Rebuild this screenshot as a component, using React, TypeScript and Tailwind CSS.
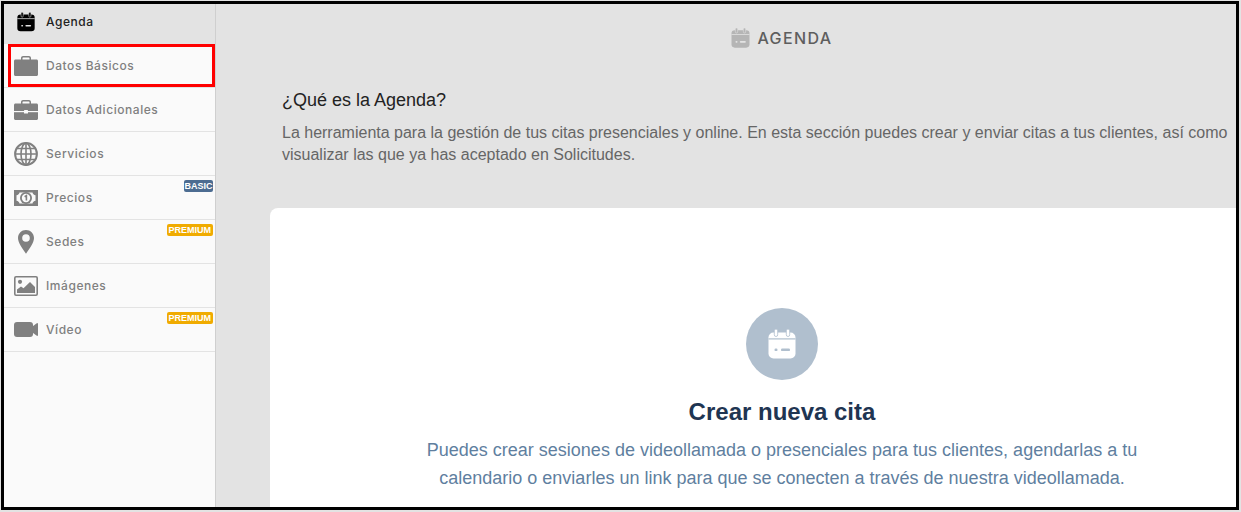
import type { ReactNode } from 'react';

const navFont = "font-['Inter','Noto_Sans',sans-serif]";
const bodyFont = "font-['Liberation_Sans',Arial,sans-serif]";

function CalendarIcon({ fill, cut, className }: { fill: string; cut: string; className: string }) {
  return (
    <svg viewBox="0 0 28 30" className={className}>
      <rect x="0.5" y="3.500" width="27" height="26" rx="5" fill={fill} />
      <rect x="6.300" y="0" width="3.400" height="7.500" rx="1.700" fill={fill} stroke={cut} strokeWidth="0.800" />
      <rect x="18.300" y="0" width="3.400" height="7.500" rx="1.700" fill={fill} stroke={cut} strokeWidth="0.800" />
      <rect x="0.500" y="9.300" width="27" height="1.200" fill={cut} />
      <rect x="6.500" y="19.500" width="3" height="2.600" rx="1.200" fill={cut} />
      <rect x="13" y="19.500" width="9" height="2.600" rx="1.200" fill={cut} />
    </svg>
  );
}

function Briefcase({ clasp }: { clasp?: boolean }) {
  return (
    <svg viewBox="0 0 24 20" className="h-5 w-6" fill="#808080">
      <path d="M7 4V2C7 .9 7.900 0 9 0h6c1.100 0 2 .9 2 2v2h-1.500V2.200c0-.4-.3-.7-.7-.7H9.200c-.4 0-.7.300-.7.700V4z" />
      <path d="M1.500 3.500h21c.8 0 1.500.7 1.500 1.500v13.500c0 .8-.7 1.500-1.500 1.500h-21C.7 20 0 19.300 0 18.500V5c0-.8.7-1.500 1.500-1.500z" />
      {clasp && <rect x="0" y="11" width="24" height="1.200" fill="#fafafa" />}
      {clasp && <rect x="10" y="10" width="4" height="3.400" rx=".5" fill="#fafafa" />}
    </svg>
  );
}

function Globe() {
  return (
    <svg viewBox="0 0 24 24" className="h-6 w-6" fill="none" stroke="#808080" strokeWidth="1.600">
      <circle cx="12" cy="12" r="10.900" strokeWidth="2" />
      <ellipse cx="12" cy="12" rx="5" ry="10.900" />
      <path d="M12 1.100v21.800M1.100 12h21.800M2.800 6.500h18.400M2.800 17.500h18.400" />
    </svg>
  );
}

function Bill() {
  return (
    <svg viewBox="0 0 24 16" className="h-4 w-6">
      <rect x="0" y="0" width="24" height="16" fill="#808080" />
      <path d="M5.500 2.500h13c.2 1.400 1.400 2.500 3 2.700v5.600c-1.600.2-2.800 1.300-3 2.700h-13c-.2-1.400-1.400-2.500-3-2.700V5.200c1.600-.2 2.800-1.300 3-2.700z" fill="#fafafa" />
      <circle cx="12" cy="8" r="6" fill="#808080" />
      <circle cx="12" cy="8" r="4.200" fill="#fafafa" />
      <path d="M10.600 6.700l1.800-1.100v5" fill="none" stroke="#808080" strokeWidth="1.600" />
    </svg>
  );
}

function Pin() {
  return (
    <svg viewBox="0 0 16 24" className="h-6 w-4" fill="#808080">
      <path fillRule="evenodd" d="M8 0c4.400 0 8 3.500 8 7.900 0 4.700-4.500 10.400-8 15.800C4.500 18.300 0 12.600 0 7.900 0 3.500 3.600 0 8 0zm0 4.200a3.800 3.800 0 1 0 0 7.600 3.800 3.800 0 0 0 0-7.600z" />
    </svg>
  );
}

function Picture() {
  return (
    <svg viewBox="0 0 24 20" className="h-5 w-6">
      <rect x=".8" y=".8" width="22.400" height="18.400" rx="1.200" fill="none" stroke="#808080" strokeWidth="1.600" />
      <circle cx="6" cy="5.800" r="2.100" fill="#808080" />
      <path d="M3 17v-3.500l4-3 2.500 1.800 6.500-6.300 5 5V17z" fill="#808080" />
    </svg>
  );
}

function Video() {
  return (
    <svg viewBox="0 0 24 15" className="h-[15px] w-6" fill="#808080">
      <rect x="0" y="0" width="19" height="15" rx="3" />
      <path d="M17 5.500L22.800 1.200c.5-.3 1.200 0 1.200.6v11.400c0 .6-.7.900-1.200.6L17 9.500z" />
    </svg>
  );
}

function NavRow({ icon, label, badge, boxed }: { icon: ReactNode; label: string; badge?: 'BASIC' | 'PREMIUM'; boxed?: boolean }) {
  return (
    <div className="relative flex h-11 items-center gap-2 border-b border-[#e3e3e3] px-[10px]">
      <span className="flex w-6 shrink-0 justify-center">{icon}</span>
      <span className={`${navFont} text-[12px] font-[450] tracking-[0.55px] text-[#808080]`}>{label}</span>
      {badge === 'BASIC' && (
        <span className={`${bodyFont} absolute right-[2px] top-1 rounded-[2px] bg-[#4c6c91] px-[0.5px] text-[9px] font-bold leading-3 text-white`}>BASIC</span>
      )}
      {badge === 'PREMIUM' && (
        <span className={`${bodyFont} absolute right-[2px] top-1 rounded-[2px] bg-[#f0ab00] px-[2px] text-[9px] font-bold leading-3 text-white`}>PREMIUM</span>
      )}
      {boxed && <span className="absolute inset-y-0 left-1 right-0 border-[3px] border-[#ff0000]" />}
    </div>
  );
}

export default function App() {
  return (
    <div className="h-[512px] w-[1241px] overflow-hidden bg-[#e3e3e3] pb-[2px] pl-px pr-[2px] pt-px">
      <div className="flex h-full overflow-hidden border-[3px] border-black bg-[#e3e3e3]">
        <aside className="w-[212px] shrink-0 border-r border-[#cfcfcf] bg-[#fafafa]">
          <div className="flex h-10 items-center gap-2 bg-[#e3e3e3] px-[10px] pb-1">
            <span className="flex w-6 shrink-0 justify-center">
              <CalendarIcon fill="#000000" cut="#e3e3e3" className="h-5 w-[18px]" />
            </span>
            <span className={`${navFont} text-[12px] font-[450] tracking-[0.55px] text-[#222222]`}>Agenda</span>
          </div>
          <NavRow icon={<Briefcase />} label="Datos Básicos" boxed />
          <NavRow icon={<Briefcase clasp />} label="Datos Adicionales" />
          <NavRow icon={<Globe />} label="Servicios" />
          <NavRow icon={<Bill />} label="Precios" badge="BASIC" />
          <NavRow icon={<Pin />} label="Sedes" badge="PREMIUM" />
          <NavRow icon={<Picture />} label="Imágenes" />
          <NavRow icon={<Video />} label="Vídeo" badge="PREMIUM" />
        </aside>

        <main className={`${bodyFont} ml-[54px] flex w-[1024px] shrink-0 flex-col`}>
          <div className="flex h-[67px] items-center justify-center gap-[7px]">
            <CalendarIcon fill="#b5b5b5" cut="#e3e3e3" className="h-5 w-[19px]" />
            <span className={`${navFont} text-[16px] font-[450] tracking-[1.4px] text-[#5e5e5e]`}>AGENDA</span>
          </div>
          <div className="h-[137px] px-3 pt-[17px]">
            <h2 className="text-[18px] leading-6 text-[#222222]">¿Qué es la Agenda?</h2>
            <p className="mt-[10px] whitespace-nowrap text-[16px] leading-[22px] text-[#666666]">
              La herramienta para la gestión de tus citas presenciales y online. En esta sección puedes crear y enviar citas a tus clientes, así como
              <br />
              visualizar las que ya has aceptado en Solicitudes.
            </p>
          </div>
          <section className="flex flex-1 flex-col items-center rounded-tl-lg bg-white pt-[100px] text-center">
            <div className="flex h-[72px] w-[72px] items-center justify-center rounded-full bg-[#b0bfce]">
              <CalendarIcon fill="#ffffff" cut="#b0bfce" className="h-[30px] w-[28px]" />
            </div>
            <h3 className="mt-4 text-[24px] font-bold leading-8 text-[#1f3552]">Crear nueva cita</h3>
            <p className="mt-2 whitespace-nowrap text-[18px] leading-[28px] text-[#5f7f9f]">
              Puedes crear sesiones de videollamada o presenciales para tus clientes, agendarlas a tu
              <br />
              calendario o enviarles un link para que se conecten a través de nuestra videollamada.
            </p>
          </section>
        </main>
      </div>
    </div>
  );
}
